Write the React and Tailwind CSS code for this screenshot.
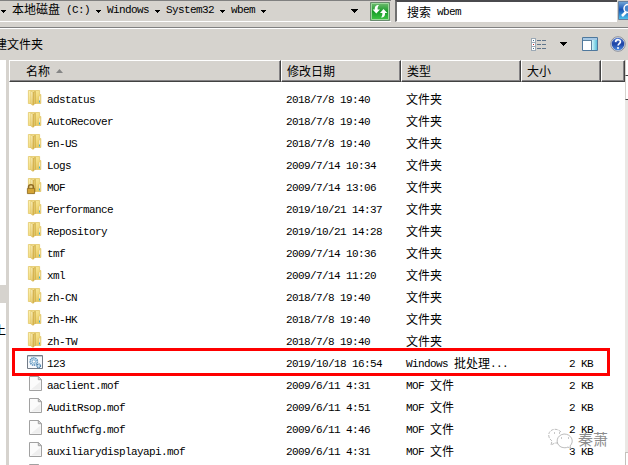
import React from "react";

const rows = [
  ["folder", "adstatus", "2018/7/8 19:40", "文件夹", ""],
  ["folder", "AutoRecover", "2018/7/8 19:40", "文件夹", ""],
  ["folder", "en-US", "2018/7/8 19:40", "文件夹", ""],
  ["folder", "Logs", "2009/7/14 10:34", "文件夹", ""],
  ["locked", "MOF", "2009/7/14 13:06", "文件夹", ""],
  ["folder", "Performance", "2019/10/21 14:37", "文件夹", ""],
  ["folder", "Repository", "2019/10/21 14:28", "文件夹", ""],
  ["folder", "tmf", "2009/7/14 10:36", "文件夹", ""],
  ["folder", "xml", "2009/7/14 11:20", "文件夹", ""],
  ["folder", "zh-CN", "2018/7/8 19:40", "文件夹", ""],
  ["folder", "zh-HK", "2018/7/8 19:40", "文件夹", ""],
  ["folder", "zh-TW", "2018/7/8 19:40", "文件夹", ""],
  ["batch", "123", "2019/10/18 16:54", "Windows 批处理...", "2 KB"],
  ["file", "aaclient.mof", "2009/6/11 4:31", "MOF 文件", "2 KB"],
  ["file", "AuditRsop.mof", "2009/6/11 4:51", "MOF 文件", "2 KB"],
  ["file", "authfwcfg.mof", "2009/6/11 4:46", "MOF 文件", "2 KB"],
  ["file", "auxiliarydisplayapi.mof", "2009/6/11 4:31", "MOF 文件", "3 KB"],
  ["file", "", "", "", ""],
];

// Latin characters advance 6px, Chinese characters 12px.
function Txt({ children }) {
  const parts = children.match(/[\u4e00-\u9fff]+|[^\u4e00-\u9fff]+/g) || [];
  return (
    <span className="flex h-[14px] shrink-0 items-center whitespace-pre leading-[14px]">
      {parts.map((p, i) =>
        /[\u4e00-\u9fff]/.test(p) ? (
          <span key={i} className="font-['Noto_Sans_CJK_SC',sans-serif] text-[12px]">{p}</span>
        ) : (
          <span key={i} className="pt-[1px] font-['Liberation_Mono',monospace] text-[11px] tracking-[-0.6px]">{p}</span>
        )
      )}
    </span>
  );
}

function Folder({ locked }) {
  return (
    <svg className="-mt-[2px] block h-4 w-4 overflow-visible" viewBox="0 0 16 16">
      <defs>
        <linearGradient id="fold" x1="0" y1="0" x2="1" y2="1">
          <stop offset="0" stopColor="#fdf3b4" />
          <stop offset=".5" stopColor="#f3de85" />
          <stop offset="1" stopColor="#e2c050" />
        </linearGradient>
        <linearGradient id="flap" x1="0" x2="1" y2="1">
          <stop offset="0" stopColor="#fffad6" />
          <stop offset="1" stopColor="#dcb94f" />
        </linearGradient>
      </defs>
      <path d="M1.4.5h11.2v4h1.2v9H1.4z" fill="url(#fold)" stroke="#e2c768" strokeWidth=".8" />
      <path d="M6 2 8.6 1v12.4L6 15.2z" fill="#cba43b" />
      <path d="M7.3 2.2v11.6" stroke="#ecd98c" strokeWidth=".8" />
      <path d="M3.8 1 6.2 2.2v13.2l-2.4-1.5z" fill="url(#flap)" stroke="#dabb58" strokeWidth=".6" />
      <path d="M12 6h1.3v6.8H12z" fill="#fffbe0" stroke="#d8b95b" strokeWidth=".4" />
      <path d="M12 10.4h1v2.2h-1z" fill="#3fb3c4" />
      {locked && (
        <g>
          <path d="M1.6 10.5V8.8C1.6 6 6.4 6 6.4 8.8v1.7" fill="none" stroke="#8f6b25" strokeWidth="1.6" />
          <path d="M.4 10.4h7.2v5.2H.4z" fill="#c99627" stroke="#8c671b" strokeWidth=".8" />
          <path d="M1 12h6M1 14h6" stroke="#e8be52" strokeWidth=".7" />
        </g>
      )}
    </svg>
  );
}

function Icon({ kind }) {
  if (kind === "batch")
    return (
      <svg className="block h-4 w-4 overflow-visible" viewBox="0 0 16 16">
        <path d="M.5.5h15v13H.5z" fill="#f6f9fc" stroke="#727b87" />
        <path d="M1 1.5h14" stroke="#c1cad3" />
        <circle cx="6.8" cy="6.5" r="3.6" fill="#dcedf7" stroke="#5c91bd" strokeWidth="1.7" strokeDasharray="1.3 .7" />
        <circle cx="6.8" cy="6.5" r="1.7" fill="#fff" stroke="#79a9cb" />
        <circle cx="11.7" cy="10.8" r="1.8" fill="#d3e8f5" stroke="#447ca9" strokeWidth="1.4" strokeDasharray="1 .5" />
      </svg>
    );
  if (kind === "file")
    return (
      <svg className="-mt-[2px] block h-4 w-4 overflow-visible" viewBox="0 0 16 16">
        <path d="M2.5.5h8.8l3.2 3.2v10.8h-12z" fill="#fbfbfb" stroke="#a1a1a1" />
        <path d="M11.3.5v3.2h3.2z" fill="#ddd" stroke="#a1a1a1" />
        <path d="m4 13.5 9.5-8v8z" fill="#eee" />
      </svg>
    );
  return <Folder locked={kind === "locked"} />;
}

const Tri = () => (
  <svg className="mx-[1px] mt-[1px] h-[3px] w-[5px] shrink-0" viewBox="0 0 5 3" shapeRendering="crispEdges">
    <path d="M0 0h5v1H4v1H3v1H2V2H1V1H0z" />
  </svg>
);

const Crumb = ({ children }) => <div className="mx-[5px] mb-[4px]"><Txt>{children}</Txt></div>;

function Address() {
  return (
    <div className="flex h-[27px] shrink-0 items-start">
      <div className="flex h-[22px] w-[391px] items-center border-t border-b border-t-[#808080] border-b-white">
        <div className="flex h-full flex-1 items-center">
          <Tri />
          <Crumb>本地磁盘 (C:)</Crumb>
          <Tri />
          <Crumb>Windows</Crumb>
          <Tri />
          <Crumb>System32</Crumb>
          <Tri />
          <Crumb>wbem</Crumb>
          <Tri />
        </div>
        <svg className="mr-[12px] h-[4px] w-[7px]" viewBox="0 0 7 4" shapeRendering="crispEdges"><path d="M0 0h7v1H6v1H5v1H4v1H3V3H2V2H1V1H0z" /></svg>
        <svg className="mr-[1px] h-[19px] w-[20px]" viewBox="0 0 20 19">
          <defs><linearGradient id="green" x2="0" y2="1"><stop stopColor="#75bd75" /><stop offset=".5" stopColor="#179b28" /><stop offset="1" stopColor="#42c947" /></linearGradient></defs>
          <path d="M.5.5h19v18H.5z" fill="url(#green)" stroke="#698b6d" />
          <path d="M1.5 1.5h17v16h-17z" fill="none" stroke="#9bd99a" />
          <path d="M9 3C5.5 3 4.600 5 4.800 7.500H2.600L6.300 11.500 10 7.500H7.700C7.400 5.700 7.800 4.500 9 3zM11 15.500c3.300 0 4.200-2 4-4.500h2.300l-3.800-4L10 11h2.300c.2 1.800-.1 3-1.300 4.500z" fill="#fff" />
        </svg>
      </div>
      <div className="ml-[4px] flex h-[22px] w-[222px] items-center border-t-2 border-b border-l-2 border-t-[#4a4a4d] border-b-white border-l-[#707070] bg-white pl-[10px]">
        <Txt>搜索 wbem</Txt>
      </div>
      <svg className="ml-[1px] h-[22px] w-[10px] shrink-0" viewBox="0 0 10 22">
        <defs><linearGradient id="blue" x2="0" y2="1"><stop stopColor="#75aad8" /><stop offset=".45" stopColor="#1752b5" /><stop offset="1" stopColor="#51c8ef" /></linearGradient></defs>
        <path d="M.5 1.5H12v18H.5z" fill="url(#blue)" stroke="#667f9e" />
        <path d="m4 16 4-4" stroke="#fff" strokeWidth="2.5" />
        <circle cx="10" cy="8.5" r="4" fill="#4786ce" stroke="#fff" strokeWidth="1.5" />
      </svg>
    </div>
  );
}

function Toolbar() {
  return (
    <div className="flex h-[33px] shrink-0 items-center border-t border-t-[#808080] shadow-[inset_0_1px_0_#fff]">
      <div className="-ml-[5px] w-[536px]"><Txt>建文件夹</Txt></div>
      <svg className="h-[13px] w-[15px]" viewBox="0 0 15 13" shapeRendering="crispEdges">
        {[0, 4, 8].map((y) => <g key={y}><path d={`M.5 ${y + .5}h4v4h-4z`} fill="#fff" stroke="#9ca9b5" /><path d={`M6 ${y + 2.5}h4m1 0h4`} stroke="#60758b" /><path d={`M2 ${y + 2}h1v1H2z`} fill={y === 4 ? "#b22" : "#456f8f"} /></g>)}
      </svg>
      <svg className="ml-[14px] h-[4px] w-[7px]" viewBox="0 0 7 4" shapeRendering="crispEdges"><path d="M0 0h7v1H6v1H5v1H4v1H3V3H2V2H1V1H0z" /></svg>
      <svg className="ml-[15px] h-[14px] w-[16px]" viewBox="0 0 16 14">
        <defs><linearGradient id="pane" x2="1"><stop stopColor="#d1f6fc" /><stop offset="1" stopColor="#58bfd8" /></linearGradient></defs>
        <path d="M.5.5h15v13H.5z" fill="#fff" stroke="#4f789d" /><path d="M1 1h14v2H1z" fill="#a6c8e5" />
        <path d="M10 3h5v10h-5z" fill="url(#pane)" /><path d="M9.5 3v10M1 3.5h9" stroke="#5c829f" />
      </svg>
      <svg className="ml-[12px] h-[16px] w-[16px]" viewBox="0 0 16 16">
        <defs><linearGradient id="help" x2="0" y2="1"><stop stopColor="#5079d1" /><stop offset=".5" stopColor="#1d43a4" /><stop offset="1" stopColor="#4f8ce0" /></linearGradient></defs>
        <circle cx="8" cy="8" r="7.3" fill="#e0e4ed" stroke="#8b8f9b" /><circle cx="8" cy="8" r="6.3" fill="url(#help)" />
        <path d="M5.6 6.1c.2-3.400 5-3 4.800-.2-.1 1.700-2.300 1.600-2.300 3.500" fill="none" stroke="#fff" strokeWidth="1.6" /><circle cx="8" cy="11.900" r="1" fill="#fff" />
      </svg>
    </div>
  );
}

function Head({ children, className }) {
  return <div className={`flex h-[22px] items-center border-t border-r border-b border-l border-t-white border-r-[#424242] border-b-[#424242] border-l-white shadow-[inset_-1px_-1px_0_#848284] ${className}`}>{children}</div>;
}

function Watermark() {
  return (
    <div className="absolute left-[547px] top-[427px] flex h-[24px] w-[66px] items-center">
      <svg className="h-[24px] w-[28px] shrink-0" viewBox="0 0 28 24" fill="none" stroke="#aaa" strokeWidth=".8">
        <path d="M14 5C8-1 0 4 2 10c.5 2 2 3 3 4l-1 4 4-2h3" strokeDasharray="3 1" />
        <path d="M17 7c-8 1-9 10-3 13 3 1 5 1 7 0l3 2-1-3c5-5 1-12-6-12z" fill="#fff" /><path d="M7 6h1m4 0h1m1 5h1m6 0h1" stroke="#777" />
      </svg>
      <span className="ml-[3px] font-['Noto_Sans_CJK_SC',sans-serif] text-[15px] leading-[20px] text-[#8c8c8c]">秦萧</span>
    </div>
  );
}

export default function App() {
  return (
    <div className="relative flex h-[465px] w-[628px] flex-col overflow-hidden bg-[#d6d3ce] text-black">
      <Address />
      <Toolbar />
      <div className="flex h-[405px] shrink-0">
        <div className="flex w-[6px] shrink-0 flex-col overflow-hidden bg-white">
          <div className="mt-[225px] h-[18px] shrink-0 bg-[#d6d3ce]" />
          <div className="mt-[20px] -ml-[6px]"><Txt>上</Txt></div>
        </div>
        <div className="w-[3px] shrink-0 bg-[#d6d3ce]" />
        <div className="w-[616px] shrink-0 bg-white">
          <div className="flex bg-[#d6d3ce]">
            <Head className="w-[272px] pl-[16px]"><Txt>名称</Txt><svg className="ml-[6px] h-[4px] w-[7px]" viewBox="0 0 7 4"><path d="m0 4 3.500-4L7 4z" fill="#858585" /></svg></Head>
            <Head className="w-[120px] pl-[5px]"><Txt>修改日期</Txt></Head>
            <Head className="w-[120px] pl-[5px]"><Txt>类型</Txt></Head>
            <Head className="w-[80px] pl-[5px]"><Txt>大小</Txt></Head>
            <Head className="w-[24px]" />
          </div>
          <div className="pt-[6px]">
            {rows.map(([kind, name, date, type, size], i) => (
              <div key={i} className="flex h-[22px] items-center">
                <div className="ml-[18px] w-[20px] shrink-0"><Icon kind={kind} /></div>
                <div className="w-[239px] shrink-0"><Txt>{name}</Txt></div>
                <div className="w-[120px] shrink-0"><Txt>{date}</Txt></div>
                <div className="w-[120px] shrink-0"><Txt>{type}</Txt></div>
                <div className="flex w-[67px] justify-end"><Txt>{size}</Txt></div>
              </div>
            ))}
          </div>
        </div>
        <div className="flex w-[3px] shrink-0 flex-col bg-[#eae8e5]">
          <div className="h-[16px] shrink-0 border-b border-l border-b-[#404040] border-l-[#d6d3ce] bg-white" />
          <div className="h-[24px] shrink-0 border-b border-l border-b-[#404040] border-l-[#d6d3ce] bg-white" />
          <div className="mt-[352px] flex-1 border-t border-l border-[#c4c1bc] bg-white" />
        </div>
      </div>
      <div className="absolute left-[12px] top-[348px] h-[28px] w-[598px] border-[3px] border-[#fe0000]" />
      <Watermark />
    </div>
  );
}
